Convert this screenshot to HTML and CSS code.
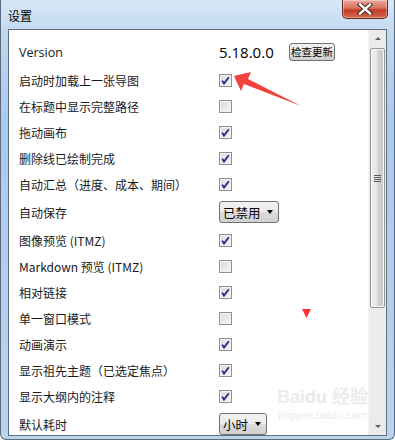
FILE: index.html
```html
<!DOCTYPE html>
<html lang="zh-CN">
<head>
    <meta charset="UTF-8">
    <title>设置</title>
    <link rel="stylesheet" href="styles.css">
</head>
<body>
    <div class="window">
        <div class="titlebar">
            <span class="title">设置</span>
            <button class="close" type="button">
                <svg width="18" height="12" viewBox="0 0 18 12"><path d="M4 1.5 L14 10.5 M14 1.5 L4 10.5" stroke="#4a2a26" stroke-width="4.4" stroke-linecap="square"/><path d="M4 1.5 L14 10.5 M14 1.5 L4 10.5" stroke="#fff" stroke-width="2.4" stroke-linecap="square"/></svg>
            </button>
        </div>
        <div class="client">
            <div class="content">
                <div class="row row-version">
                    <span class="label">Version</span>
                    <span class="version">5.18.0.0</span>
                    <button class="btn" type="button">检查更新</button>
                </div>
                <div class="row"><span class="label">启动时加载上一张导图</span><span class="cb on"><svg viewBox="0 0 9 9"><path d="M1.2 4.6 L3 7.6 L7.8 1.2" fill="none" stroke="#25288a" stroke-width="1.8"/></svg></span></div>
                <div class="row"><span class="label">在标题中显示完整路径</span><span class="cb"></span></div>
                <div class="row"><span class="label">拖动画布</span><span class="cb on"><svg viewBox="0 0 9 9"><path d="M1.2 4.6 L3 7.6 L7.8 1.2" fill="none" stroke="#25288a" stroke-width="1.8"/></svg></span></div>
                <div class="row"><span class="label">删除线已绘制完成</span><span class="cb on"><svg viewBox="0 0 9 9"><path d="M1.2 4.6 L3 7.6 L7.8 1.2" fill="none" stroke="#25288a" stroke-width="1.8"/></svg></span></div>
                <div class="row"><span class="label">自动汇总（进度、成本、期间）</span><span class="cb on"><svg viewBox="0 0 9 9"><path d="M1.2 4.6 L3 7.6 L7.8 1.2" fill="none" stroke="#25288a" stroke-width="1.8"/></svg></span></div>
                <div class="row row-select"><span class="label">自动保存</span><span class="select wide">已禁用<i class="caret"></i></span></div>
                <div class="row"><span class="label">图像预览 (ITMZ)</span><span class="cb on"><svg viewBox="0 0 9 9"><path d="M1.2 4.6 L3 7.6 L7.8 1.2" fill="none" stroke="#25288a" stroke-width="1.8"/></svg></span></div>
                <div class="row"><span class="label">Markdown 预览 (ITMZ)</span><span class="cb"></span></div>
                <div class="row"><span class="label">相对链接</span><span class="cb on"><svg viewBox="0 0 9 9"><path d="M1.2 4.6 L3 7.6 L7.8 1.2" fill="none" stroke="#25288a" stroke-width="1.8"/></svg></span></div>
                <div class="row"><span class="label">单一窗口模式</span><span class="cb"></span></div>
                <div class="row"><span class="label">动画演示</span><span class="cb on"><svg viewBox="0 0 9 9"><path d="M1.2 4.6 L3 7.6 L7.8 1.2" fill="none" stroke="#25288a" stroke-width="1.8"/></svg></span></div>
                <div class="row"><span class="label">显示祖先主题（已选定焦点）</span><span class="cb on"><svg viewBox="0 0 9 9"><path d="M1.2 4.6 L3 7.6 L7.8 1.2" fill="none" stroke="#25288a" stroke-width="1.8"/></svg></span></div>
                <div class="row"><span class="label">显示大纲内的注释</span><span class="cb on"><svg viewBox="0 0 9 9"><path d="M1.2 4.6 L3 7.6 L7.8 1.2" fill="none" stroke="#25288a" stroke-width="1.8"/></svg></span></div>
                <div class="row row-select"><span class="label">默认耗时</span><span class="select">小时<i class="caret"></i></span></div>

                <!-- annotations drawn over the screenshot -->
                <svg class="marks" width="379" height="407" viewBox="8 29 379 407">
                    <polygon points="234,76 251,72 248,79 301,106 244,84 241,91" fill="#f2403a"/>
                    <polygon points="302,309 311,309 306.5,318" fill="#ff3030"/>
                </svg>
                <div class="watermark">
                    <span class="wm-logo">Bai<b>du</b> 经验</span>
                    <span class="wm-url">jingyan.baidu.com</span>
                </div>
            </div>
            <div class="scrollbar">
                <span class="sb-btn"><i class="tri up"></i></span>
                <span class="thumb"><i class="grip"></i></span>
                <span class="track"></span>
                <span class="sb-btn"><i class="tri down"></i></span>
            </div>
        </div>
    </div>
</body>
</html>
```

FILE: styles.css
```css
body { margin: 0; font-family: "Noto Sans CJK SC", "Noto Sans", sans-serif; font-size: 12px; color: #1a1a1a; }
.window {
    width: 395px; height: 440px; box-sizing: border-box;
    border: 1px solid #5c6b7c; border-top: none; border-radius: 0 0 6px 6px;
    background: linear-gradient(to bottom, #d7e7f7 0, #bcd7f1 40px, #a9cbec 120px, #b9d4ef 440px);
    padding: 0 7px 3px 7px;
    display: flex; flex-direction: column;
}
.titlebar { height: 29px; display: flex; align-items: flex-start; justify-content: space-between; flex: none; }
.title { margin-top: 7px; font-size: 12px; color: #000; }
.close {
    width: 46px; height: 19px; margin-right: -1px; padding: 0;
    border: 1px solid #6a2a22; border-top: none; border-radius: 0 0 5px 5px;
    background: linear-gradient(to bottom, #e9a99b 0, #d9735f 45%, #c43c25 55%, #d4674f 100%);
    box-shadow: inset 0 0 0 1px rgba(255,255,255,0.35);
    display: flex; align-items: center; justify-content: center;
}
.close svg { display: block; }
.client {
    flex: 1; display: flex; min-height: 0;
    border: 1px solid #626d7a; background: #fff;
}
.content { flex: 1; position: relative; overflow: hidden; padding: 7px 0 0 10px; }
.row { display: flex; align-items: center; height: 26px; }
.row-version { height: 30px; }
.row-select { height: 30px; }
.label { width: 200px; flex: none; white-space: nowrap; }
.row-version .label { font-family: "Open Sans", "Noto Sans CJK SC", sans-serif; font-size: 12.5px; }
.version { width: 70px; font-family: "Open Sans", sans-serif; font-size: 15px; color: #000; }
.btn {
    height: 18px; padding: 0 1px; font-family: inherit; font-size: 10.5px; line-height: 14px; color: #000;
    border: 1px solid #707070; border-radius: 3px;
    background: linear-gradient(to bottom, #f2f2f2 0, #ebebeb 50%, #dddddd 51%, #cfcfcf 100%);
}
.cb {
    width: 11px; height: 11px; flex: none; border: 1px solid #8e8f8f;
    background: linear-gradient(135deg, #dcdcdc 0, #f4f4f4 100%);
    box-shadow: inset 0 0 0 1px #f4f4f4;
    display: flex; align-items: center; justify-content: center;
}
.cb svg { width: 9px; height: 9px; display: block; }
.select {
    display: flex; align-items: center; box-sizing: border-box; white-space: nowrap; flex: none;
    width: 48px; height: 22px; padding: 0 5px 0 3px; font-size: 12.5px; color: #000;
    border: 1px solid #707070; border-radius: 3px;
    background: linear-gradient(to bottom, #f3f3f3 0, #ebebeb 50%, #dddddd 51%, #d0d0d0 100%);
}
.select.wide { width: 60px; }
.caret { margin-left: auto; width: 0; height: 0; border-left: 3.5px solid transparent; border-right: 3.5px solid transparent; border-top: 4px solid #000; }
.marks { position: absolute; left: -1px; top: -1px; }
.watermark {
    position: absolute; left: 268px; top: 356px; display: flex; flex-direction: column; align-items: center;
    color: #ececec; font-family: "Liberation Sans", sans-serif; white-space: nowrap;
}
.wm-logo { font-size: 18px; font-weight: bold; line-height: 22px; }
.wm-logo b { color: #e8e8e8; }
.wm-url { font-size: 11px; line-height: 14px; }
.scrollbar { width: 17px; flex: none; display: flex; flex-direction: column; background: #ececec; border-left: 1px solid #f4f4f4; }
.sb-btn { height: 17px; flex: none; display: flex; align-items: center; justify-content: center; background: #eaeaea; }
.tri { width: 0; height: 0; border-left: 3.5px solid transparent; border-right: 3.5px solid transparent; }
.tri.up { border-bottom: 3.5px solid #606060; }
.tri.down { border-top: 3.5px solid #606060; }
.thumb {
    height: 260px; flex: none; margin: 1px 1px 0 1px; box-sizing: border-box;
    border: 1px solid #979797; border-radius: 2px;
    background: linear-gradient(to right, #eeeeee 0, #e6e6e6 45%, #d2d2d2 55%, #c8c8c8 100%);
    box-shadow: inset 0 0 0 1px #f8f8f8;
    display: flex; align-items: center; justify-content: center;
}
.grip { width: 7px; height: 7px; background: repeating-linear-gradient(to bottom, #5c5c5c 0, #5c5c5c 1px, transparent 1px, transparent 2px); }
.track { flex: 1; }
```
